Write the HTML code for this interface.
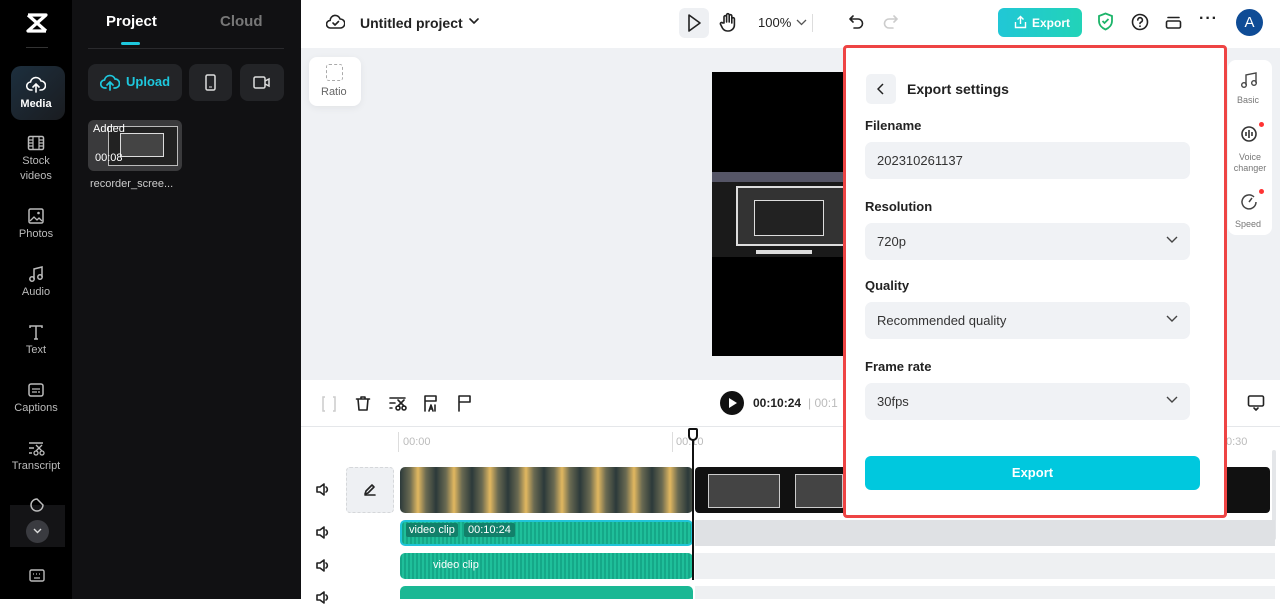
<!DOCTYPE html>
<html><head><meta charset="utf-8"><style>
*{box-sizing:border-box;margin:0;padding:0}
body{width:1280px;height:599px;overflow:hidden;position:relative;font-family:"Liberation Sans",sans-serif;background:#fff}
.abs{position:absolute}
.rail{left:0;top:0;width:72px;height:599px;background:#000}
.rail .it{position:absolute;left:0;width:72px;text-align:center;color:#bbb;font-size:11px;line-height:15px}
.rail svg{display:block;margin:0 auto 3px}
.panel{left:72px;top:0;width:229px;height:599px;background:#111113}
.ic{stroke:#222;fill:none;stroke-width:1.6;stroke-linecap:round;stroke-linejoin:round}
.lbl{font-size:13px;color:#222;font-weight:bold}
.field{position:absolute;left:19px;width:325px;height:37px;background:#f0f2f5;border-radius:7px;font-size:13px;color:#333;padding:11px 12px}
.field svg{position:absolute;right:12px;top:13px}
</style></head><body>
<!-- rail -->
<div class="abs rail">
 <svg class="abs" style="left:25px;top:12px" width="24" height="22" viewBox="0 0 24 22"><path d="M3 3h18L3 19h18M3 3l18 16" stroke="#fff" stroke-width="3.2" fill="none" stroke-linejoin="round"/></svg>
 <div class="abs" style="left:26px;top:47px;width:22px;height:1px;background:#333"></div>
 <div class="abs" style="left:11px;top:66px;width:54px;height:54px;border-radius:10px;background:linear-gradient(135deg,#1d2f3e,#1a1c20)"></div>
 <div class="it" style="top:76px;color:#fff;font-weight:bold"><svg width="20" height="18" viewBox="0 0 20 18"><path d="M6 14H5a4 4 0 0 1-.5-8A5.5 5.5 0 0 1 15 5a4 4 0 0 1 0 9h-1M10 16V8M7 11l3-3 3 3" stroke="#fff" stroke-width="1.6" fill="none" stroke-linecap="round"/></svg>Media</div>
 <div class="it" style="top:135px"><svg width="18" height="16" viewBox="0 0 18 16"><rect x="1.5" y="1.5" width="15" height="13" rx="1.5" stroke="#bbb" stroke-width="1.5" fill="none"/><path d="M6 2v12M12 2v12M2 8h4M12 8h4M2 5h4M2 11h4M12 5h4M12 11h4" stroke="#bbb" stroke-width="1.2"/></svg>Stock<br>videos</div>
 <div class="it" style="top:208px"><svg width="16" height="16" viewBox="0 0 16 16"><rect x="1" y="1" width="14" height="14" rx="1.5" stroke="#bbb" stroke-width="1.5" fill="none"/><path d="M2 13l4-4 3 3 2-2 3 3" stroke="#bbb" stroke-width="1.3" fill="none"/><circle cx="10.5" cy="5" r="1.3" fill="#bbb"/></svg>Photos</div>
 <div class="it" style="top:266px"><svg width="16" height="16" viewBox="0 0 16 16"><path d="M6 13V3l8-2v10" stroke="#bbb" stroke-width="1.5" fill="none"/><circle cx="4" cy="13" r="2.2" stroke="#bbb" stroke-width="1.5" fill="none"/><circle cx="12" cy="11" r="2.2" stroke="#bbb" stroke-width="1.5" fill="none"/></svg>Audio</div>
 <div class="it" style="top:324px"><svg width="16" height="16" viewBox="0 0 16 16"><path d="M2 4V2h12v2M8 2v13M6 15h4" stroke="#bbb" stroke-width="1.5" fill="none"/></svg>Text</div>
 <div class="it" style="top:383px"><svg width="16" height="15" viewBox="0 0 16 15"><rect x="1" y="1" width="14" height="12" rx="2" stroke="#bbb" stroke-width="1.5" fill="none"/><path d="M4 6h8M4 9h5M10 9h2" stroke="#bbb" stroke-width="1.3"/></svg>Captions</div>
 <div class="it" style="top:441px"><svg width="18" height="15" viewBox="0 0 18 15"><path d="M2 2h14M2 7h5M2 12h3" stroke="#bbb" stroke-width="1.4"/><circle cx="9" cy="12" r="2" stroke="#bbb" fill="none" stroke-width="1.3"/><circle cx="15" cy="12" r="2" stroke="#bbb" fill="none" stroke-width="1.3"/><path d="M9 4l6 6M15 4l-6 6" stroke="#bbb" stroke-width="1.3"/></svg>Transcript</div>
 <div class="abs" style="left:10px;top:505px;width:55px;height:42px;background:#141416"></div>
 <svg class="abs" style="left:29px;top:497px" width="16" height="16" viewBox="0 0 16 16"><path d="M14 8A6 6 0 1 1 8 2l6 6z" stroke="#bbb" stroke-width="1.5" fill="none"/></svg>
 <div class="abs" style="left:26px;top:520px;width:23px;height:23px;border-radius:50%;background:#3a3b40"><svg style="display:block;margin:8px auto 0" width="9" height="6" viewBox="0 0 9 6"><path d="M1 1l3.5 3.5L8 1" stroke="#ddd" stroke-width="1.4" fill="none"/></svg></div>
 <svg class="abs" style="left:29px;top:569px" width="16" height="14" viewBox="0 0 16 14"><rect x="1" y="1" width="14" height="11" rx="1.5" stroke="#bbb" stroke-width="1.4" fill="none"/><path d="M4 5h1M7 5h1M10 5h1M5 9h6" stroke="#bbb" stroke-width="1.3"/></svg>
</div>
<!-- panel -->
<div class="abs panel">
 <div class="abs" style="left:34px;top:13px;color:#fff;font-weight:bold;font-size:15px">Project</div>
 <div class="abs" style="left:148px;top:13px;color:#777;font-weight:bold;font-size:15px">Cloud</div>
 <div class="abs" style="left:49px;top:42px;width:19px;height:3px;background:#1ec8de;border-radius:2px"></div>
 <div class="abs" style="left:16px;top:48px;width:196px;height:1px;background:#2a2a2d"></div>
 <div class="abs" style="left:16px;top:64px;width:94px;height:37px;background:#232427;border-radius:8px;color:#1ec8de;font-weight:bold;font-size:13px;padding:10px 0 0 38px">Upload</div>
 <svg class="abs" style="left:28px;top:74px" width="20" height="18" viewBox="0 0 20 18"><path d="M6 14H5a4 4 0 0 1-.5-8A5.5 5.5 0 0 1 15 5a4 4 0 0 1 0 9h-1M10 16V8M7 11l3-3 3 3" stroke="#1ec8de" stroke-width="1.7" fill="none" stroke-linecap="round"/></svg>
 <div class="abs" style="left:117px;top:64px;width:43px;height:37px;background:#232427;border-radius:8px"><svg style="display:block;margin:10px auto" width="11" height="17" viewBox="0 0 11 17"><rect x="1" y="1" width="9" height="15" rx="1.5" stroke="#ddd" stroke-width="1.5" fill="none"/><path d="M4 13h3" stroke="#ddd"/></svg></div>
 <div class="abs" style="left:168px;top:64px;width:44px;height:37px;background:#232427;border-radius:8px"><svg style="display:block;margin:12px auto" width="18" height="13" viewBox="0 0 18 13"><rect x="1" y="1" width="11" height="11" rx="1.5" stroke="#ddd" stroke-width="1.5" fill="none"/><path d="M12 5l4-2v7l-4-2" stroke="#ddd" stroke-width="1.5" fill="none"/></svg></div>
 <div class="abs" style="left:16px;top:120px;width:94px;height:51px;background:#3a3a3c;border-radius:6px;overflow:hidden">
  <div class="abs" style="left:20px;top:6px;width:70px;height:40px;border:1px solid #bbb;background:#222"></div>
  <div class="abs" style="left:32px;top:13px;width:44px;height:24px;border:1px solid #ddd;background:#444"></div>
  <div class="abs" style="left:5px;top:3px;color:#fff;font-size:11px">Added</div>
  <div class="abs" style="left:7px;top:32px;color:#fff;font-size:11px">00:08</div>
 </div>
 <div class="abs" style="left:18px;top:178px;color:#ccc;font-size:11px">recorder_scree...</div>
</div>
<div class="abs" style="left:301px;top:284px;width:8px;height:52px;background:#1b1b1d;border-radius:0 8px 8px 0"></div>
<!-- topbar -->
<svg class="abs" style="left:326px;top:13px" width="19" height="17" viewBox="0 0 19 17"><path d="M5 15H4.5a3.8 3.8 0 0 1-.3-7.6A5 5 0 0 1 14 6a3.8 3.8 0 0 1 .5 9z" class="ic"/><path d="M7 10l2 2 3.5-3.5" class="ic"/></svg>
<div class="abs" style="left:360px;top:15px;font-size:14px;font-weight:bold;color:#222">Untitled project</div>
<svg class="abs" style="left:469px;top:18px" width="10" height="7" viewBox="0 0 10 7"><path d="M1 1l4 4 4-4" class="ic"/></svg>
<div class="abs" style="left:679px;top:8px;width:30px;height:30px;background:#eef0f3;border-radius:6px"></div>
<svg class="abs" style="left:686px;top:13px" width="16" height="20" viewBox="0 0 16 20"><path d="M3 2l11 8-11 8z" class="ic"/></svg>
<svg class="abs" style="left:719px;top:12px" width="18" height="20" viewBox="0 0 18 20"><path d="M5 11V5a1.3 1.3 0 0 1 2.6 0v5V3a1.3 1.3 0 0 1 2.6 0v7V4a1.3 1.3 0 0 1 2.6 0v7V7a1.3 1.3 0 0 1 2.6 0v6a6 6 0 0 1-6 6h-1a6 6 0 0 1-5-3l-2-4a1.3 1.3 0 0 1 2.3-1z" class="ic"/></svg>
<div class="abs" style="left:758px;top:15px;font-size:13px;color:#222">100%</div>
<svg class="abs" style="left:796px;top:19px" width="11" height="7" viewBox="0 0 11 7"><path d="M1 1l4.5 4.5L10 1" stroke="#555" stroke-width="1.3" fill="none"/></svg>
<div class="abs" style="left:812px;top:14px;width:1px;height:18px;background:#ddd"></div>
<svg class="abs" style="left:849px;top:14px" width="15" height="15" viewBox="0 0 15 15"><path d="M4 2L1 5l3 3M1 5h8a4.5 4.5 0 0 1 0 9H5" class="ic"/></svg>
<svg class="abs" style="left:883px;top:14px" width="15" height="15" viewBox="0 0 15 15"><path d="M11 2l3 3-3 3M14 5H6a4.5 4.5 0 0 0 0 9h4" stroke="#ccc" stroke-width="1.6" fill="none" stroke-linecap="round"/></svg>
<div class="abs" style="left:998px;top:8px;width:84px;height:29px;border-radius:6px;color:#fff;font-weight:bold;font-size:12px;padding:8px 0 0 34px;background:linear-gradient(90deg,#21c7d6,#22d3b8)">Export</div>
<svg class="abs" style="left:1014px;top:15px" width="13" height="14" viewBox="0 0 13 14"><path d="M6.5 9V1.5M3.5 4.5l3-3 3 3M1.5 7v5.5h10V7" stroke="#fff" stroke-width="1.4" fill="none"/></svg>
<svg class="abs" style="left:1097px;top:12px" width="17" height="19" viewBox="0 0 17 19"><path d="M8.5 1.5L2 4v5c0 4 3 7 6.5 8.5C12 16 15 13 15 9V4z" stroke="#1cb46a" stroke-width="1.8" fill="none"/><path d="M5.5 9l2 2 4-4" stroke="#1cb46a" stroke-width="1.8" fill="none"/></svg>
<svg class="abs" style="left:1131px;top:13px" width="18" height="18" viewBox="0 0 18 18"><circle cx="9" cy="9" r="7.5" class="ic"/><path d="M6.8 7a2.3 2.3 0 1 1 3 2.2c-.6.3-.8.7-.8 1.3" class="ic"/><circle cx="9" cy="13.2" r=".9" fill="#222"/></svg>
<svg class="abs" style="left:1165px;top:14px" width="17" height="16" viewBox="0 0 17 16"><rect x="1.5" y="7" width="14" height="7" rx="1.5" class="ic"/><path d="M3 3.5h11" class="ic"/></svg>
<div class="abs" style="left:1199px;top:10px;font-size:16px;font-weight:bold;color:#222;letter-spacing:1px">···</div>
<div class="abs" style="left:1236px;top:9px;width:27px;height:27px;border-radius:50%;background:#0f4c96;color:#fff;font-size:15px;text-align:center;line-height:27px">A</div>
<!-- canvas -->
<div class="abs" style="left:301px;top:48px;width:979px;height:332px;background:#eff1f4"></div>
<div class="abs" style="left:309px;top:57px;width:52px;height:49px;background:#fff;border-radius:8px;box-shadow:0 2px 8px rgba(0,0,0,.06)"></div>
<div class="abs" style="left:326px;top:64px;width:17px;height:17px;border:1.5px dashed #aaa;border-radius:3px"></div>
<div class="abs" style="left:321px;top:86px;font-size:11px;color:#666">Ratio</div>
<div class="abs" style="left:712px;top:72px;width:140px;height:284px;background:#000">
 <div class="abs" style="left:0;top:100px;width:140px;height:10px;background:#556"></div>
 <div class="abs" style="left:0;top:110px;width:140px;height:75px;background:#1a1a1a"></div>
 <div class="abs" style="left:24px;top:114px;width:120px;height:60px;border:2px solid #ddd;background:#333"></div>
 <div class="abs" style="left:42px;top:128px;width:70px;height:36px;border:1px solid #ddd;background:#222"></div>
 <div class="abs" style="left:44px;top:178px;width:56px;height:4px;background:#ddd"></div>
</div>
<!-- right mini panel -->
<div class="abs" style="left:1228px;top:60px;width:44px;height:175px;background:#fff;border-radius:8px"></div>
<svg class="abs" style="left:1240px;top:71px" width="18" height="18" viewBox="0 0 18 18"><path d="M6 14V4l10-2v10" stroke="#444" stroke-width="1.4" fill="none"/><circle cx="4" cy="14" r="2.3" stroke="#444" stroke-width="1.4" fill="none"/><circle cx="14" cy="12" r="2.3" stroke="#444" stroke-width="1.4" fill="none"/></svg>
<div class="abs" style="left:1237px;top:95px;font-size:9px;color:#777">Basic</div>
<svg class="abs" style="left:1240px;top:125px" width="18" height="18" viewBox="0 0 18 18"><circle cx="9" cy="9" r="7" stroke="#333" stroke-width="1.6" fill="none"/><path d="M6 7v4M9 5v8M12 7v4" stroke="#333" stroke-width="1.6"/></svg>
<div class="abs" style="left:1259px;top:122px;width:5px;height:5px;border-radius:50%;background:#f33"></div>
<div class="abs" style="left:1231px;top:152px;font-size:9px;color:#777;text-align:center;width:38px;line-height:11px">Voice changer</div>
<svg class="abs" style="left:1240px;top:193px" width="18" height="18" viewBox="0 0 18 18"><path d="M14 4a7 7 0 1 0 2 5" stroke="#444" stroke-width="1.5" fill="none"/><path d="M9 9l3-4" stroke="#444" stroke-width="1.5"/></svg>
<div class="abs" style="left:1259px;top:189px;width:5px;height:5px;border-radius:50%;background:#f33"></div>
<div class="abs" style="left:1235px;top:219px;font-size:9px;color:#777">Speed</div>
<!-- timeline -->
<div class="abs" style="left:301px;top:426px;width:979px;height:1px;background:#e5e7ea"></div>
<svg class="abs" style="left:322px;top:396px" width="14" height="16" viewBox="0 0 14 16"><path d="M3 1H1v14h2M11 1h2v14h-2" stroke="#ccc" stroke-width="1.5" fill="none"/></svg>
<svg class="abs" style="left:355px;top:395px" width="16" height="17" viewBox="0 0 16 17"><path d="M1.5 4h13M6 4V2h4v2M3 4l1 11h8l1-11" class="ic"/></svg>
<svg class="abs" style="left:389px;top:396px" width="18" height="15" viewBox="0 0 18 15"><path d="M1 2h15M1 7h5M1 12h2" class="ic"/><circle cx="9" cy="12" r="2" class="ic"/><circle cx="15" cy="12" r="2" class="ic"/><path d="M9 4l6 6M15 4l-6 6" class="ic"/></svg>
<svg class="abs" style="left:423px;top:395px" width="15" height="17" viewBox="0 0 15 17"><path d="M2 16V1h11v5M2 6h11M6 16l2-6 2 6M7 14h2M12 10v6" class="ic"/></svg>
<svg class="abs" style="left:457px;top:395px" width="15" height="17" viewBox="0 0 15 17"><path d="M2 16V1h11v6H2" class="ic"/></svg>
<div class="abs" style="left:720px;top:391px;width:24px;height:24px;border-radius:50%;background:#111"><svg style="display:block;margin:7px 0 0 9px" width="8" height="10" viewBox="0 0 8 10"><path d="M0 0l8 5-8 5z" fill="#fff"/></svg></div>
<div class="abs" style="left:753px;top:396px;font-size:12px;font-weight:bold;color:#222">00:10:24</div>
<div class="abs" style="left:808px;top:396px;font-size:12px;color:#bbb">| 00:1</div>
<svg class="abs" style="left:1247px;top:394px" width="18" height="18" viewBox="0 0 18 18"><rect x="1.5" y="2" width="15" height="10" rx="1.5" class="ic"/><path d="M7 14l2 2 2-2" class="ic"/></svg>
<div class="abs" style="left:398px;top:432px;width:1px;height:20px;background:#ddd"></div>
<div class="abs" style="left:403px;top:436px;font-size:11px;color:#bbb">00:00</div>
<div class="abs" style="left:672px;top:432px;width:1px;height:20px;background:#ddd"></div>
<div class="abs" style="left:676px;top:436px;font-size:11px;color:#bbb">00:10</div>
<div class="abs" style="left:1226px;top:436px;font-size:11px;color:#bbb">0:30</div>
<div class="abs" style="left:1272px;top:450px;width:4px;height:90px;background:#e4e6e9;border-radius:2px"></div>
<!-- tracks -->
<svg class="abs" style="left:316px;top:483px" width="14" height="13" viewBox="0 0 14 13"><path d="M1 4h3l4-3v11l-4-3H1zM10 4a3 3 0 0 1 0 5" class="ic" stroke-width="1.3"/></svg>
<svg class="abs" style="left:316px;top:526px" width="14" height="13" viewBox="0 0 14 13"><path d="M1 4h3l4-3v11l-4-3H1zM10 4a3 3 0 0 1 0 5" class="ic" stroke-width="1.3"/></svg>
<svg class="abs" style="left:316px;top:559px" width="14" height="13" viewBox="0 0 14 13"><path d="M1 4h3l4-3v11l-4-3H1zM10 4a3 3 0 0 1 0 5" class="ic" stroke-width="1.3"/></svg>
<svg class="abs" style="left:316px;top:591px" width="14" height="13" viewBox="0 0 14 13"><path d="M1 4h3l4-3v11l-4-3H1zM10 4a3 3 0 0 1 0 5" class="ic" stroke-width="1.3"/></svg>
<div class="abs" style="left:346px;top:467px;width:48px;height:46px;background:#eef0f3;border:1px dashed #d5d7da;border-radius:4px"><svg style="display:block;margin:14px auto" width="14" height="14" viewBox="0 0 14 14"><path d="M2 12l1-3 6-6 2 2-6 6zM2 13h10" class="ic" stroke-width="1.3"/></svg></div>
<div class="abs" style="left:400px;top:467px;width:293px;height:46px;border-radius:5px;background:repeating-linear-gradient(90deg,#2c3a3a 0,#6a6a52 10px,#e2b860 18px,#6a6a52 26px,#2c3a3a 36px);"></div>
<div class="abs" style="left:695px;top:467px;width:575px;height:46px;background:#111;border-radius:4px"></div>
<div class="abs" style="left:708px;top:474px;width:72px;height:34px;border:1px solid #ccc;background:#444"></div>
<div class="abs" style="left:795px;top:474px;width:48px;height:34px;border:1px solid #ccc;background:#444"></div>
<div class="abs" style="left:695px;top:520px;width:580px;height:26px;background:#dfe1e4"></div>
<div class="abs" style="left:695px;top:553px;width:580px;height:26px;background:#eef0f2"></div>
<div class="abs" style="left:695px;top:586px;width:580px;height:13px;background:#eef0f2"></div>
<div class="abs" style="left:400px;top:520px;width:293px;height:26px;border:2px solid #20c4d8;border-radius:5px;background:repeating-linear-gradient(90deg,#15a888 0 2px,#1fbf9a 2px 4px)"></div>
<div class="abs" style="left:406px;top:523px;background:#12806a;color:#fff;font-size:11px;padding:1px 3px;border-radius:2px">video clip</div>
<div class="abs" style="left:464px;top:523px;background:#12806a;color:#fff;font-size:11px;padding:1px 4px;border-radius:2px">00:10:24</div>
<div class="abs" style="left:400px;top:553px;width:293px;height:26px;border-radius:5px;background:repeating-linear-gradient(90deg,#15a888 0 2px,#1fbf9a 2px 4px)"></div>
<div class="abs" style="left:433px;top:559px;color:#fff;font-size:11px">video clip</div>
<div class="abs" style="left:400px;top:586px;width:293px;height:13px;border-radius:5px 5px 0 0;background:#1bb894"></div>
<div class="abs" style="left:692px;top:438px;width:2px;height:142px;background:#111"></div>
<div class="abs" style="left:688px;top:428px;width:10px;height:13px;border:2px solid #111;background:#fff;border-radius:2px 2px 5px 5px"></div>
<!-- export panel -->
<div class="abs" style="left:843px;top:45px;width:384px;height:473px;background:#fff;border:3px solid #ee4444;border-radius:4px">
 <div class="abs" style="left:20px;top:26px;width:30px;height:30px;background:#f0f2f5;border-radius:5px"><svg style="display:block;margin:9px 0 0 11px" width="7" height="12" viewBox="0 0 7 12"><path d="M6 1L1 6l5 5" stroke="#222" stroke-width="1.5" fill="none"/></svg></div>
 <div class="abs" style="left:61px;top:33px;font-size:14px;font-weight:bold;color:#222">Export settings</div>
 <div class="abs lbl" style="left:19px;top:70px">Filename</div>
 <div class="field" style="top:94px">202310261137</div>
 <div class="abs lbl" style="left:19px;top:151px">Resolution</div>
 <div class="field" style="top:175px">720p<svg width="12" height="8" viewBox="0 0 12 8"><path d="M1 1l5 5 5-5" stroke="#444" stroke-width="1.4" fill="none"/></svg></div>
 <div class="abs lbl" style="left:19px;top:230px">Quality</div>
 <div class="field" style="top:254px">Recommended quality<svg width="12" height="8" viewBox="0 0 12 8"><path d="M1 1l5 5 5-5" stroke="#444" stroke-width="1.4" fill="none"/></svg></div>
 <div class="abs lbl" style="left:19px;top:311px">Frame rate</div>
 <div class="field" style="top:335px">30fps<svg width="12" height="8" viewBox="0 0 12 8"><path d="M1 1l5 5 5-5" stroke="#444" stroke-width="1.4" fill="none"/></svg></div>
 <div class="abs" style="left:19px;top:408px;width:335px;height:34px;background:#00c8de;border-radius:6px;color:#fff;font-weight:bold;font-size:13px;text-align:center;line-height:34px">Export</div>
</div>
</body></html>
